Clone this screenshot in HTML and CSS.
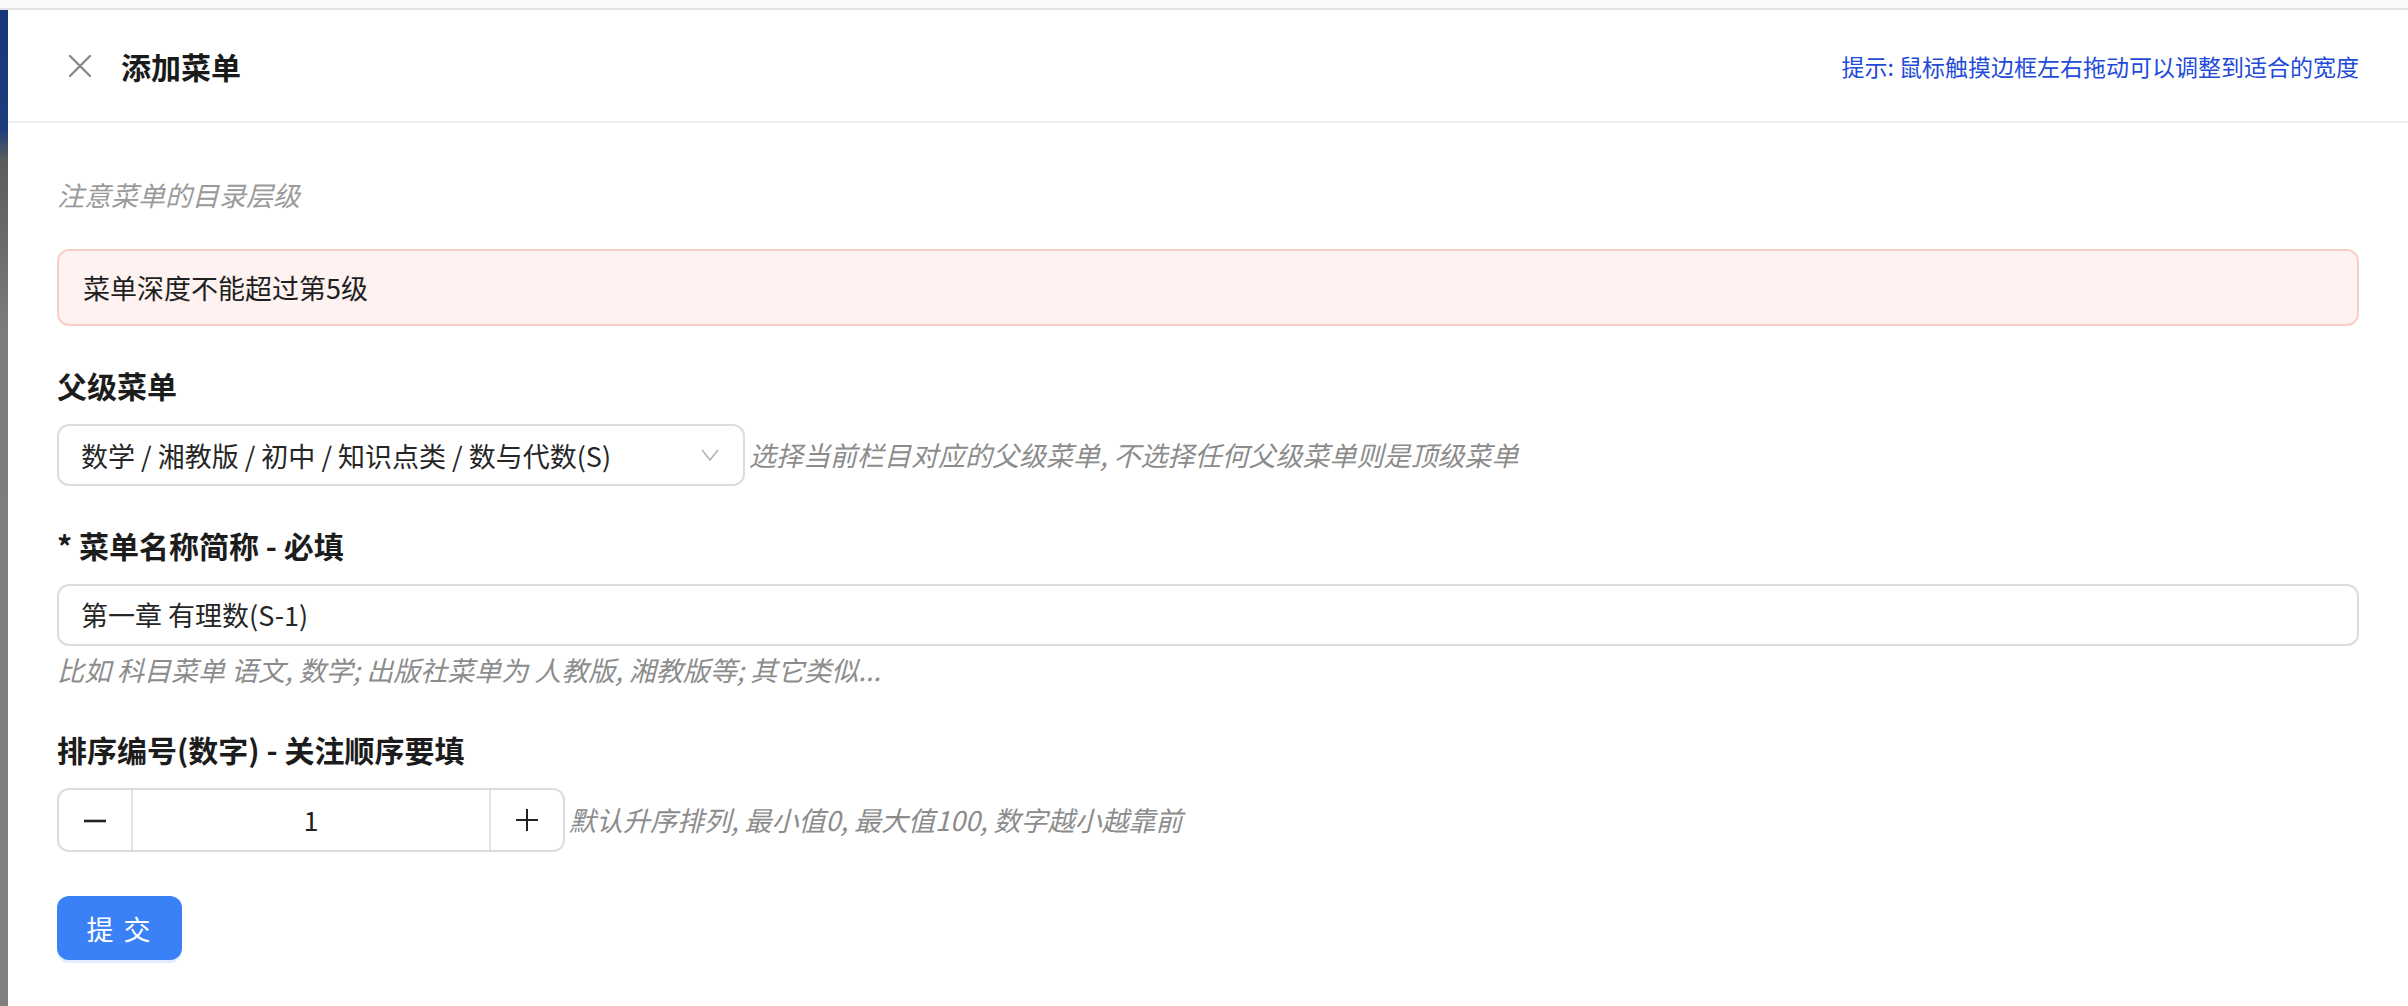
FILE: index.html
```html
<!DOCTYPE html>
<html>
<head>
    <title>添加菜单</title>
    <link rel="stylesheet" href="styles.css">
</head>
<body>
    <div class="topbar"></div>
    <div class="screen">
        <div class="backdrop"></div>
        <div class="drawer">
            <div class="drawer-header">
                <div class="header-left">
                    <svg class="close-icon" width="24" height="24" viewBox="0 0 24 24">
                        <path d="M2 2 L22 22 M22 2 L2 22" stroke="#8a8a8a" stroke-width="2.4" stroke-linecap="round" fill="none"/>
                    </svg>
                    <h2 class="drawer-title">添加菜单</h2>
                </div>
                <div class="header-hint">提示: 鼠标触摸边框左右拖动可以调整到适合的宽度</div>
            </div>

            <div class="drawer-body">
                <p class="note">注意菜单的目录层级</p>
                <div class="alert">菜单深度不能超过第5级</div>

                <div class="form-item">
                    <label class="form-label">父级菜单</label>
                    <div class="field-row">
                        <div class="select">
                            <span class="select-value">数学 / 湘教版 / 初中 / 知识点类 / 数与代数(S)</span>
                            <svg class="chevron" width="18" height="12" viewBox="0 0 18 12">
                                <path d="M1 1 L9 11 L17 1" stroke="#b5b5b5" stroke-width="1.6" fill="none"/>
                            </svg>
                        </div>
                        <span class="help">选择当前栏目对应的父级菜单, 不选择任何父级菜单则是顶级菜单</span>
                    </div>
                </div>

                <div class="form-item">
                    <label class="form-label">* 菜单名称简称 - 必填</label>
                    <div class="text-input">第一章 有理数(S-1)</div>
                    <div class="help help-below">比如 科目菜单 语文, 数学; 出版社菜单为 人教版, 湘教版等; 其它类似...</div>
                </div>

                <div class="form-item">
                    <label class="form-label">排序编号(数字) - 关注顺序要填</label>
                    <div class="field-row">
                        <div class="number-input">
                            <span class="step-btn">
                                <svg width="24" height="24" viewBox="0 0 24 24">
                                    <path d="M1 13 L23 13" stroke="#222" stroke-width="2.6" fill="none"/>
                                </svg>
                            </span>
                            <span class="number-value">1</span>
                            <span class="step-btn">
                                <svg width="24" height="24" viewBox="0 0 24 24">
                                    <path d="M1 12 L23 12 M12 1 L12 23" stroke="#222" stroke-width="2" fill="none"/>
                                </svg>
                            </span>
                        </div>
                        <span class="help">默认升序排列, 最小值0, 最大值100, 数字越小越靠前</span>
                    </div>
                </div>

                <button class="submit-btn">提 交</button>
            </div>
        </div>
    </div>
</body>
</html>
```

FILE: styles.css
```css
html, body {
    margin: 0;
    height: 1006px;
    overflow: hidden;
}

body {
    font-family: "Noto Sans CJK SC", "Noto Sans", sans-serif;
    font-size: 27px;
    color: #262626;
    background-color: #808080;
}

.topbar {
    height: 8px;
    background-color: #fafafa;
    border-bottom: 2px solid #e3e3e3;
}

.screen {
    display: flex;
    height: 996px;
}

.backdrop {
    width: 8px;
    flex-shrink: 0;
    background: linear-gradient(#163878 0, #1c3d7c 118px, #5c5c5c 150px, #6a6a6a 230px, #7c7c7c 320px, #808080 100%);
}

.drawer {
    flex: 1;
    background-color: #fff;
}

.drawer-header {
    height: 111px;
    display: flex;
    align-items: center;
    justify-content: space-between;
    padding: 0 49px 0 60px;
    border-bottom: 2px solid #efefef;
}

.header-left {
    display: flex;
    align-items: center;
    gap: 29px;
}

.close-icon {
    display: block;
}

.drawer-title {
    margin: 0;
    font-size: 30px;
    font-weight: 700;
    color: #1a1a1a;
}

.header-hint {
    font-size: 23px;
    color: #1e4bd8;
}

.drawer-body {
    padding: 52px 49px 0 49px;
}

.note {
    margin: 0;
    line-height: 40px;
    font-style: italic;
    color: #9a9a9a;
}

.alert {
    margin-top: 34px;
    padding: 16px 24px;
    line-height: 41px;
    background-color: #fdf2f0;
    border: 2px solid #f8cec7;
    border-radius: 12px;
    color: #1f1f1f;
}

.form-item {
    margin-top: 37px;
}

.form-item:first-of-type {
    margin-top: 38px;
}

.form-label {
    display: block;
    font-size: 30px;
    font-weight: 700;
    line-height: 44px;
    margin-bottom: 17px;
    color: #1c1c1c;
}

.field-row {
    display: flex;
    align-items: center;
}

.select {
    width: 688px;
    height: 62px;
    box-sizing: border-box;
    border: 2px solid #dcdcdc;
    border-radius: 12px;
    display: flex;
    align-items: center;
    justify-content: space-between;
    padding: 0 24px 0 22px;
}

.select-value {
    color: #262626;
}

.chevron {
    display: block;
}

.help {
    font-style: italic;
    color: #8c8c8c;
    line-height: 40px;
    padding-left: 4px;
}

.help-below {
    padding-left: 0;
    margin-top: 4px;
}

.text-input {
    height: 62px;
    box-sizing: border-box;
    border: 2px solid #dcdcdc;
    border-radius: 12px;
    padding: 0 22px;
    line-height: 58px;
}

.number-input {
    width: 508px;
    height: 64px;
    box-sizing: border-box;
    border: 2px solid #dcdcdc;
    border-radius: 12px;
    display: flex;
}

.step-btn {
    width: 72px;
    display: flex;
    align-items: center;
    justify-content: center;
}

.number-value {
    flex: 1;
    text-align: center;
    line-height: 60px;
    border-left: 2px solid #e3e3e3;
    border-right: 2px solid #e3e3e3;
    color: #1f1f1f;
}

.submit-btn {
    display: block;
    margin-top: 44px;
    width: 125px;
    height: 64px;
    border: none;
    border-radius: 12px;
    background-color: #3a80f7;
    box-shadow: 0 3px 0 #e3eefd;
    color: #fff;
    font-family: inherit;
    font-size: 27px;
    letter-spacing: 2px;
}
```
